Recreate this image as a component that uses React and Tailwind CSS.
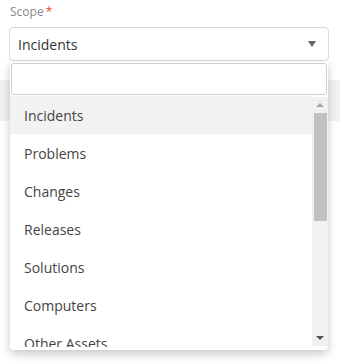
import React from 'react';

const options = ['Incidents', 'Problems', 'Changes', 'Releases', 'Solutions', 'Computers', 'Other Assets'];

export default function App() {
    return (
        <div className="relative w-[340px] h-[363px] bg-white overflow-hidden font-['Open_Sans',sans-serif]">
            {/* Label */}
            <div className="pt-[3px] pl-[10px] text-[12px] leading-[18px] text-[#8a8a8a]">
                Scope<span className="ml-[2px] text-[#e8452c]">*</span>
            </div>

            {/* Select */}
            <div className="mt-[6px] ml-[9px] w-[320px] h-[34px] flex items-center justify-between border border-[#d9d9d9] rounded-[4px] pl-[8px] pr-[12px] text-[14px] text-[#333]">
                <span>Incidents</span>
                <span className="w-0 h-0 border-l-[4px] border-r-[4px] border-t-[6px] border-l-transparent border-r-transparent border-t-[#666]" />
            </div>

            {/* Content behind the menu */}
            <div className="mt-[19px] h-[41px] bg-[#f1f1f1]" />

            {/* Dropdown menu */}
            <div className="absolute left-[10px] top-[62px] w-[318px] h-[288px] bg-white rounded-b-[4px] shadow-[0_4px_10px_rgba(0,0,0,0.22)] flex flex-col">
                <div className="p-[1px]">
                    <div className="h-[32px] border border-[#cfcfcf] rounded-[3px] bg-white" />
                </div>
                <div className="flex h-[251px] overflow-hidden">
                    <ul className="flex-1 text-[14px] text-[#444]">
                        {options.map((o, i) => (
                            <li
                                key={o}
                                className={`h-[38px] flex items-center pl-[14px] ${i === 0 ? 'bg-[#f2f2f2]' : ''}`}
                            >
                                {o}
                            </li>
                        ))}
                    </ul>
                    {/* Scrollbar */}
                    <div className="mt-[1px] w-[16px] h-[249px] bg-[#f1f1f1] flex flex-col items-center">
                        <div className="h-[16px] flex items-center justify-center">
                            <span className="w-0 h-0 border-l-[4px] border-r-[4px] border-b-[4px] border-l-transparent border-r-transparent border-b-[#a3a3a3]" />
                        </div>
                        <div className="w-[13px] h-[108px] bg-[#c1c1c1]" />
                        <div className="flex-1" />
                        <div className="h-[16px] flex items-center justify-center">
                            <span className="w-0 h-0 border-l-[4px] border-r-[4px] border-t-[4px] border-l-transparent border-r-transparent border-t-[#505050]" />
                        </div>
                    </div>
                </div>
            </div>
        </div>
    );
}
